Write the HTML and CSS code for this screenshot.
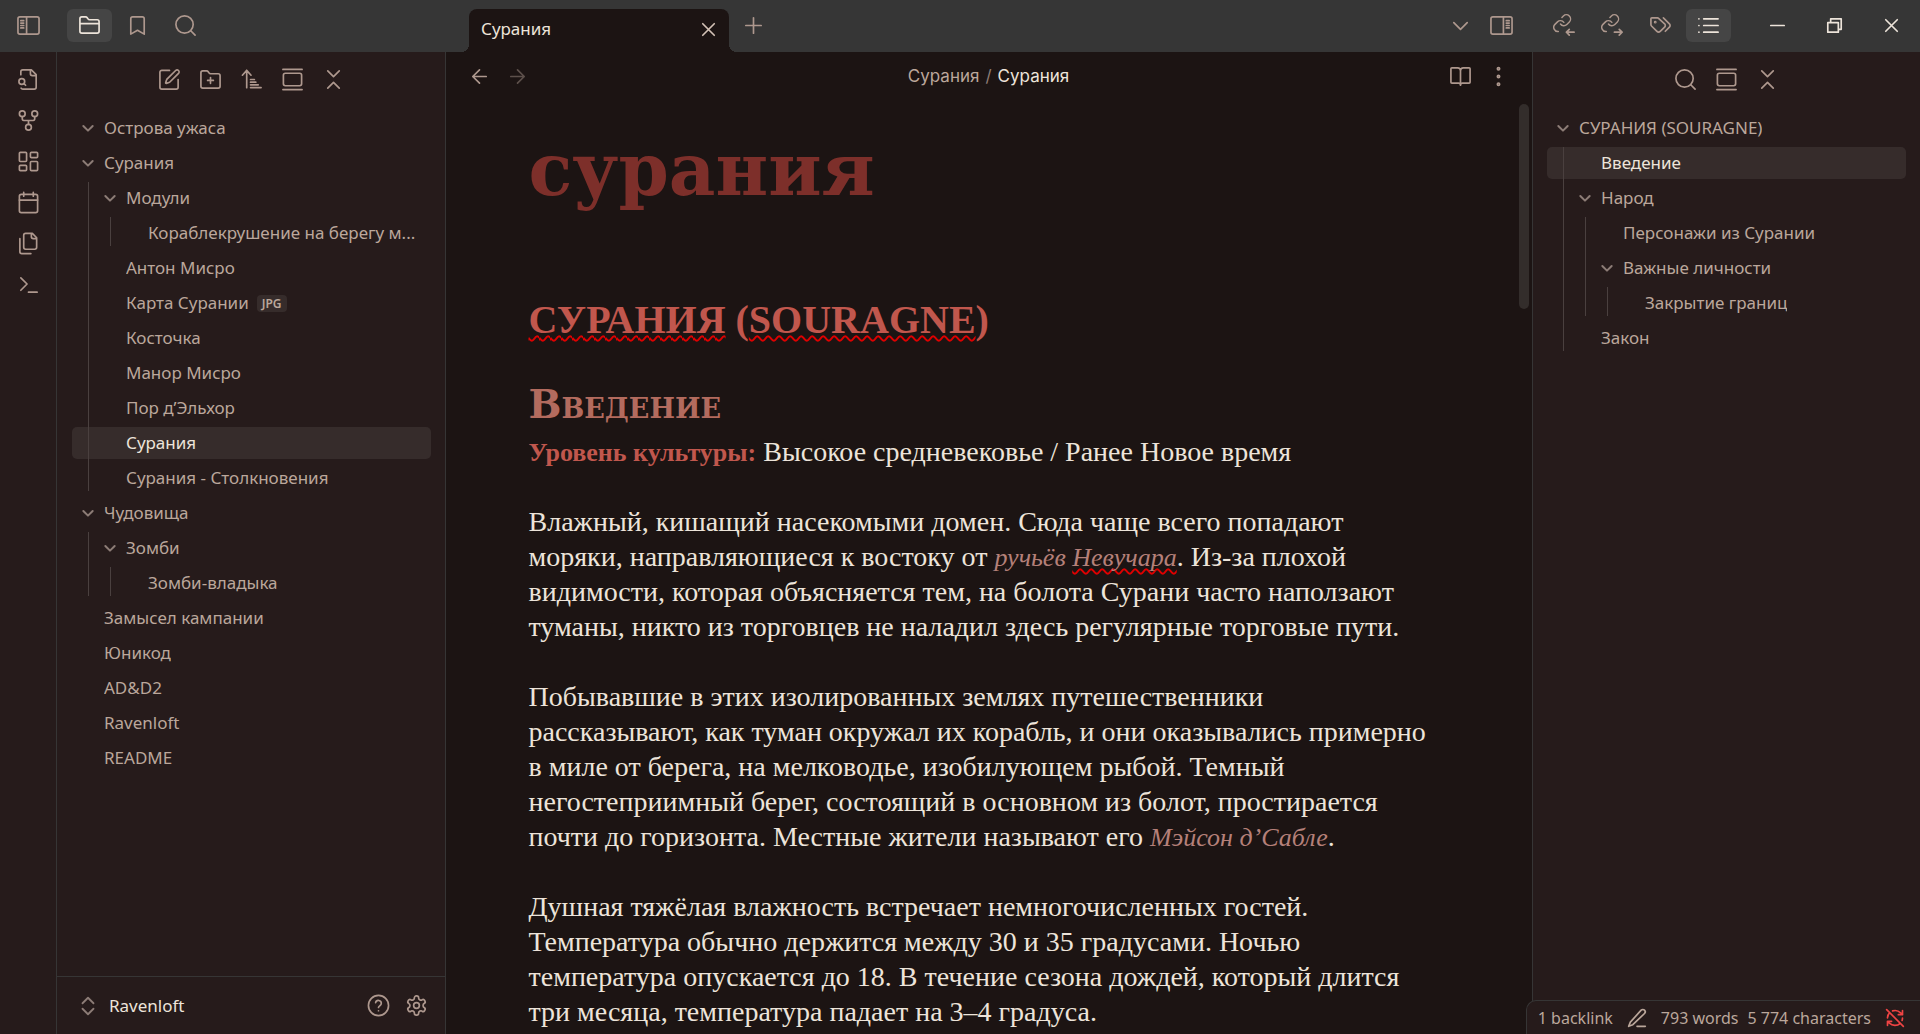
FILE: index.html
```html
<!DOCTYPE html>
<html lang="ru">
<head>
<meta charset="utf-8">
<title>Сурания</title>
<link rel="stylesheet" href="styles.css">
</head>
<body>
<svg class="sprite" aria-hidden="true">
  <symbol id="i-left" viewBox="0 0 24 24"><rect x="1" y="3" width="22" height="18" rx="2"/><path d="M10 3v18M4 7h3M4 9.500h3M4 12h3M4 14.500h3"/></symbol>
  <symbol id="i-right" viewBox="0 0 24 24"><rect x="1" y="3" width="22" height="18" rx="2"/><path d="M14 3v18M17 7h3M17 9.500h3M17 12h3M17 14.500h3"/></symbol>
  <symbol id="i-folder" viewBox="0 0 24 24"><path d="M20 20a2 2 0 0 0 2-2V8a2 2 0 0 0-2-2h-7.900a2 2 0 0 1-1.690-.9L9.600 3.900A2 2 0 0 0 7.930 3H4a2 2 0 0 0-2 2v13a2 2 0 0 0 2 2ZM2 10h20"/></symbol>
  <symbol id="i-bookmark" viewBox="0 0 24 24"><path d="m19 21-7-4-7 4V5a2 2 0 0 1 2-2h10a2 2 0 0 1 2 2v16z"/></symbol>
  <symbol id="i-search" viewBox="0 0 24 24"><circle cx="11" cy="11" r="9"/><path d="m22 22-4.500-4.500"/></symbol>
  <symbol id="i-x" viewBox="0 0 24 24"><path d="M18 6 6 18M6 6l12 12"/></symbol>
  <symbol id="i-plus" viewBox="0 0 24 24"><path d="M4 12h16M12 4v16"/></symbol>
  <symbol id="i-down" viewBox="0 0 24 24"><path d="m5 9 7 7 7-7"/></symbol>
  <symbol id="i-in" viewBox="0 0 24 24"><g transform="translate(-1 -1) scale(.88)"><path d="M10 13a5 5 0 0 0 7.540.54l3-3a5 5 0 0 0-7.070-7.070l-1.720 1.710M14 11a5 5 0 0 0-7.540-.54l-3 3a5 5 0 0 0 4 8.500"/></g><path d="M22 19h-8M17 16l-3 3 3 3"/></symbol>
  <symbol id="i-out" viewBox="0 0 24 24"><g transform="translate(-1 -1) scale(.88)"><path d="M10 13a5 5 0 0 0 7.540.54l3-3a5 5 0 0 0-7.070-7.070l-1.720 1.710M14 11a5 5 0 0 0-7.540-.54l-3 3a5 5 0 0 0 4 8.500"/></g><path d="M14 19h8M19 16l3 3-3 3"/></symbol>
  <symbol id="i-tags" viewBox="0 0 24 24"><path d="m15 4 6.300 6.300a2.400 2.400 0 0 1 0 3.400L17 18"/><path d="M10.500 5A2 2 0 0 0 9 4H3a1 1 0 0 0-1 1v6a2 2 0 0 0 .6 1.500l5.700 5.700a2.400 2.400 0 0 0 3.400 0l4.600-4.600a2.400 2.400 0 0 0 0-3.400z"/><circle cx="6.500" cy="8.500" r=".6"/></symbol>
  <symbol id="i-list" viewBox="0 0 24 24"><path d="M7 5h15M7 12h15M7 19h15M2 5h.01M2 12h.01M2 19h.01"/></symbol>
  <symbol id="i-min" viewBox="0 0 24 24"><path d="M5 12h14"/></symbol>
  <symbol id="i-restore" viewBox="0 0 24 24"><path d="M5 9h11v10H5zM8 9V5h11v11h-3"/></symbol>
  <symbol id="i-filesearch" viewBox="0 0 24 24"><path d="M14 2v4a2 2 0 0 0 2 2h4M4.270 21a2 2 0 0 0 1.730 1H18a2 2 0 0 0 2-2V7l-5-5H6a2 2 0 0 0-2 2v3M9 18l-1.500-1.500"/><circle cx="5" cy="14" r="3"/></symbol>
  <symbol id="i-fork" viewBox="0 0 24 24"><circle cx="12" cy="19" r="3"/><circle cx="5.500" cy="5" r="3"/><circle cx="18.500" cy="5" r="3"/><path d="M18.500 8v2c0 1-.5 2-1.500 2H7c-1 0-1.500-1-1.500-2V8M12 12v4"/></symbol>
  <symbol id="i-dash" viewBox="0 0 24 24"><rect x="2.500" y="2.500" width="7.500" height="9.500" rx="1"/><rect x="14" y="2.500" width="7.500" height="5.500" rx="1"/><rect x="14" y="12" width="7.500" height="9.500" rx="1"/><rect x="2.500" y="16" width="7.500" height="5.500" rx="1"/></symbol>
  <symbol id="i-cal" viewBox="0 0 24 24"><path d="M7 1.500v4M17 1.500v4M2.500 9.500h19"/><rect x="2.500" y="3.500" width="19" height="19" rx="2"/></symbol>
  <symbol id="i-files" viewBox="0 0 24 24"><path d="M20.500 7H17a2 2 0 0 1-2-2V1.500M9 18a2 2 0 0 1-2-2V3.500a2 2 0 0 1 2-2h7L20.500 6v10a2 2 0 0 1-2 2ZM3 7v13.500A2 2 0 0 0 5 22.500h9.500"/></symbol>
  <symbol id="i-term" viewBox="0 0 24 24"><path d="m4 18 6.500-6.500L4 5M12 20h9"/></symbol>
  <symbol id="i-edit" viewBox="0 0 24 24"><path d="M12 2.500H4a2 2 0 0 0-2 2V20a2 2 0 0 0 2 2h15a2 2 0 0 0 2-2v-8M18.400 2.600a1 1 0 0 1 3 3l-9 9a2 2 0 0 1-.9.500l-2.900.9a.5.500 0 0 1-.6-.6l.9-2.900a2 2 0 0 1 .5-.9z"/></symbol>
  <symbol id="i-newfolder" viewBox="0 0 24 24"><path d="M12 10v6M9 13h6M20 21a2 2 0 0 0 2-2V8a2 2 0 0 0-2-2h-7.900a2 2 0 0 1-1.690-.9L9.600 3.900A2 2 0 0 0 7.930 3H4a2 2 0 0 0-2 2v14a2 2 0 0 0 2 2Z"/></symbol>
  <symbol id="i-sort" viewBox="0 0 24 24"><path d="m2.500 7.500 4.500-5 4.500 5M7 2.500v18M11 12h4M11 14.800h5.500M11 17.600h8M11 20.400h11"/></symbol>
  <symbol id="i-gallery" viewBox="0 0 24 24"><path d="M2 1.500h20M2 22.500h20"/><rect x="2.500" y="5.500" width="19" height="13" rx="2"/></symbol>
  <symbol id="i-collapse" viewBox="0 0 24 24"><path d="m6 21 6-6 6 6M6 3l6 6 6-6"/></symbol>
  <symbol id="i-updown" viewBox="0 0 24 24"><path d="m6 15 6 6 6-6M6 9l6-6 6 6"/></symbol>
  <symbol id="i-help" viewBox="0 0 24 24"><circle cx="12" cy="12" r="10.500"/><path d="M9 9a3 3 0 0 1 5.900 1c0 2-2.900 2.500-2.900 4M12 17.500h.01"/></symbol>
  <symbol id="i-gear" viewBox="0 0 24 24"><path d="M12.220 2h-.44a2 2 0 0 0-2 2v.18a2 2 0 0 1-1 1.730l-.43.25a2 2 0 0 1-2 0l-.15-.08a2 2 0 0 0-2.730.73l-.22.38a2 2 0 0 0 .73 2.730l.15.1a2 2 0 0 1 1 1.720v.51a2 2 0 0 1-1 1.740l-.15.09a2 2 0 0 0-.73 2.730l.22.38a2 2 0 0 0 2.730.73l.15-.08a2 2 0 0 1 2 0l.43.25a2 2 0 0 1 1 1.730V20a2 2 0 0 0 2 2h.44a2 2 0 0 0 2-2v-.18a2 2 0 0 1 1-1.730l.43-.25a2 2 0 0 1 2 0l.15.08a2 2 0 0 0 2.730-.73l.22-.39a2 2 0 0 0-.73-2.730l-.15-.08a2 2 0 0 1-1-1.740v-.5a2 2 0 0 1 1-1.740l.15-.09a2 2 0 0 0 .73-2.730l-.22-.38a2 2 0 0 0-2.730-.73l-.15.08a2 2 0 0 1-2 0l-.43-.25a2 2 0 0 1-1-1.730V4a2 2 0 0 0-2-2z"/><circle cx="12" cy="12" r="3"/></symbol>
  <symbol id="i-back" viewBox="0 0 24 24"><path d="m12 19-7-7 7-7M19 12H5"/></symbol>
  <symbol id="i-fwd" viewBox="0 0 24 24"><path d="m12 5 7 7-7 7M5 12h14"/></symbol>
  <symbol id="i-book" viewBox="0 0 24 24"><path d="M12 6v15M3 19a1 1 0 0 1-1-1V4a1 1 0 0 1 1-1h6a3 3 0 0 1 3 3 3 3 0 0 1 3-3h6a1 1 0 0 1 1 1v14a1 1 0 0 1-1 1h-7a2 2 0 0 0-2 2 2 2 0 0 0-2-2z"/></symbol>
  <symbol id="i-dots" viewBox="0 0 24 24"><circle cx="12" cy="4" r="1.200"/><circle cx="12" cy="12" r="1.200"/><circle cx="12" cy="20" r="1.200"/></symbol>
  <symbol id="i-pen" viewBox="0 0 24 24"><path d="M12 22h10M17 2.600a1.500 1.500 0 0 1 4 4L7 20l-5 2 2-5z"/></symbol>
  <symbol id="i-syncoff" viewBox="0 0 24 24"><path d="M21 8l-2.260-2.260A9.750 9.750 0 0 0 9.130 3.470M8 16H3v5M3 12c0-2.490 1-4.740 2.640-6.360M3 16l2.260 2.260A9.750 9.750 0 0 0 18.360 18.360M21 12c0 1-.16 1.970-.47 2.870M21 3v5h-5M22 22 2 2"/></symbol>
</svg>

<div class="app">
  <header class="titlebar">
    <div class="bar-left">
      <button class="btn" aria-label="Свернуть панель"><svg class="icon"><use href="#i-left"/></svg></button>
      <div class="group">
        <button class="btn active" aria-label="Файлы"><svg class="icon"><use href="#i-folder"/></svg></button>
        <button class="btn" aria-label="Закладки"><svg class="icon"><use href="#i-bookmark"/></svg></button>
        <button class="btn" aria-label="Поиск"><svg class="icon"><use href="#i-search"/></svg></button>
      </div>
    </div>
    <div class="tabs">
      <div class="tab"><span>Сурания</span><button class="plain" aria-label="Закрыть вкладку"><svg class="icon"><use href="#i-x"/></svg></button></div>
      <button class="btn" aria-label="Новая вкладка"><svg class="icon"><use href="#i-plus"/></svg></button>
    </div>
    <div class="bar-tools">
      <button class="btn narrow" aria-label="Список вкладок"><svg class="icon"><use href="#i-down"/></svg></button>
      <button class="btn" aria-label="Правая панель"><svg class="icon"><use href="#i-right"/></svg></button>
    </div>
    <div class="bar-right">
      <div class="group">
        <button class="btn" aria-label="Обратные ссылки"><svg class="icon"><use href="#i-in"/></svg></button>
        <button class="btn" aria-label="Исходящие ссылки"><svg class="icon"><use href="#i-out"/></svg></button>
        <button class="btn" aria-label="Теги"><svg class="icon"><use href="#i-tags"/></svg></button>
        <button class="btn active" aria-label="Структура"><svg class="icon"><use href="#i-list"/></svg></button>
      </div>
      <div class="window">
        <button class="btn wide" aria-label="Свернуть"><svg class="icon"><use href="#i-min"/></svg></button>
        <button class="btn wide" aria-label="Восстановить"><svg class="icon"><use href="#i-restore"/></svg></button>
        <button class="btn wide" aria-label="Закрыть"><svg class="icon"><use href="#i-x"/></svg></button>
      </div>
    </div>
  </header>

  <div class="workspace">
    <nav class="ribbon">
      <button class="tool" aria-label="Быстрый переход"><svg class="icon"><use href="#i-filesearch"/></svg></button>
      <button class="tool" aria-label="Граф"><svg class="icon"><use href="#i-fork"/></svg></button>
      <button class="tool" aria-label="Холст"><svg class="icon"><use href="#i-dash"/></svg></button>
      <button class="tool" aria-label="Заметка дня"><svg class="icon"><use href="#i-cal"/></svg></button>
      <button class="tool" aria-label="Шаблоны"><svg class="icon"><use href="#i-files"/></svg></button>
      <button class="tool" aria-label="Команды"><svg class="icon"><use href="#i-term"/></svg></button>
    </nav>

    <aside class="side side-left">
      <div class="side-tools">
        <button class="tool" aria-label="Новая заметка"><svg class="icon"><use href="#i-edit"/></svg></button>
        <button class="tool" aria-label="Новая папка"><svg class="icon"><use href="#i-newfolder"/></svg></button>
        <button class="tool" aria-label="Сортировка"><svg class="icon"><use href="#i-sort"/></svg></button>
        <button class="tool" aria-label="Показать текущий файл"><svg class="icon"><use href="#i-gallery"/></svg></button>
        <button class="tool" aria-label="Свернуть все"><svg class="icon"><use href="#i-collapse"/></svg></button>
      </div>
      <ul class="tree">
        <li><a class="row" href="#"><svg class="chev"><use href="#i-down"/></svg><span>Острова ужаса</span></a></li>
        <li><a class="row" href="#"><svg class="chev"><use href="#i-down"/></svg><span>Сурания</span></a>
          <ul class="sub depth1">
            <li><a class="row" href="#"><svg class="chev"><use href="#i-down"/></svg><span>Модули</span></a>
              <ul class="sub depth2">
                <li><a class="row leaf" href="#"><span>Кораблекрушение на берегу м...</span></a></li>
              </ul>
            </li>
            <li><a class="row leaf" href="#"><span>Антон Мисро</span></a></li>
            <li><a class="row leaf" href="#"><span>Карта Сурании</span><span class="tag">JPG</span></a></li>
            <li><a class="row leaf" href="#"><span>Косточка</span></a></li>
            <li><a class="row leaf" href="#"><span>Манор Мисро</span></a></li>
            <li><a class="row leaf" href="#"><span>Пор д’Эльхор</span></a></li>
            <li><a class="row leaf selected" href="#"><span>Сурания</span></a></li>
            <li><a class="row leaf" href="#"><span>Сурания - Столкновения</span></a></li>
          </ul>
        </li>
        <li><a class="row" href="#"><svg class="chev"><use href="#i-down"/></svg><span>Чудовища</span></a>
          <ul class="sub depth1">
            <li><a class="row" href="#"><svg class="chev"><use href="#i-down"/></svg><span>Зомби</span></a>
              <ul class="sub depth2">
                <li><a class="row leaf" href="#"><span>Зомби-владыка</span></a></li>
              </ul>
            </li>
          </ul>
        </li>
        <li><a class="row leaf" href="#"><span>Замысел кампании</span></a></li>
        <li><a class="row leaf" href="#"><span>Юникод</span></a></li>
        <li><a class="row leaf" href="#"><span>AD&amp;D2</span></a></li>
        <li><a class="row leaf" href="#"><span>Ravenloft</span></a></li>
        <li><a class="row leaf" href="#"><span>README</span></a></li>
      </ul>
      <footer class="vault">
        <button class="vault-name"><svg class="chev big"><use href="#i-updown"/></svg>Ravenloft</button>
        <button class="tool" aria-label="Справка"><svg class="icon"><use href="#i-help"/></svg></button>
        <button class="tool" aria-label="Настройки"><svg class="icon"><use href="#i-gear"/></svg></button>
      </footer>
    </aside>

    <main class="pane">
      <div class="pane-head">
        <div class="head-side">
          <button class="tool" aria-label="Назад"><svg class="icon"><use href="#i-back"/></svg></button>
          <button class="tool dim" aria-label="Вперёд"><svg class="icon"><use href="#i-fwd"/></svg></button>
        </div>
        <div class="crumbs"><a href="#">Сурания</a><span class="sep">/</span><span class="here">Сурания</span></div>
        <div class="head-side end">
          <button class="tool" aria-label="Режим чтения"><svg class="icon"><use href="#i-book"/></svg></button>
          <button class="tool" aria-label="Ещё"><svg class="icon"><use href="#i-dots"/></svg></button>
        </div>
      </div>
      <div class="scroller">
        <article class="note">
          <div class="inline-title">сурания</div>
          <h1><span class="misspelt">СУРАНИЯ</span> (<span class="misspelt">SOURAGNE</span>)</h1>
          <h2>Введение</h2>
          <p><strong>Уровень культуры:</strong> Высокое средневековье / Ранее Новое время</p>
          <p>Влажный, кишащий насекомыми домен. Сюда чаще всего попадают<br>моряки, направляющиеся к востоку от <em>ручьёв <span class="misspelt">Невучара</span></em>. Из-за плохой<br>видимости, которая объясняется тем, на болота Сурани часто наползают<br>туманы, никто из торговцев не наладил здесь регулярные торговые пути.</p>
          <p>Побывавшие в этих изолированных землях путешественники<br>рассказывают, как туман окружал их корабль, и они оказывались примерно<br>в миле от берега, на мелководье, изобилующем рыбой. Темный<br>негостеприимный берег, состоящий в основном из болот, простирается<br>почти до горизонта. Местные жители называют его <em>Мэйсон д’Сабле</em>.</p>
          <p>Душная тяжёлая влажность встречает немногочисленных гостей.<br>Температура обычно держится между 30 и 35 градусами. Ночью<br>температура опускается до 18. В течение сезона дождей, который длится<br>три месяца, температура падает на 3–4 градуса.</p>
        </article>
        <div class="scrollbar"><div class="thumb"></div></div>
      </div>
    </main>

    <aside class="side side-right">
      <div class="side-tools">
        <button class="tool" aria-label="Поиск"><svg class="icon"><use href="#i-search"/></svg></button>
        <button class="tool" aria-label="Прокрутка"><svg class="icon"><use href="#i-gallery"/></svg></button>
        <button class="tool" aria-label="Свернуть все"><svg class="icon"><use href="#i-collapse"/></svg></button>
      </div>
      <ul class="tree">
        <li><a class="row" href="#"><svg class="chev"><use href="#i-down"/></svg><span>СУРАНИЯ (SOURAGNE)</span></a>
          <ul class="sub depth1">
            <li><a class="row leaf selected" href="#"><span>Введение</span></a></li>
            <li><a class="row" href="#"><svg class="chev"><use href="#i-down"/></svg><span>Народ</span></a>
              <ul class="sub depth2">
                <li><a class="row leaf" href="#"><span>Персонажи из Сурании</span></a></li>
                <li><a class="row" href="#"><svg class="chev"><use href="#i-down"/></svg><span>Важные личности</span></a>
                  <ul class="sub depth3">
                    <li><a class="row leaf" href="#"><span>Закрытие границ</span></a></li>
                  </ul>
                </li>
              </ul>
            </li>
            <li><a class="row leaf" href="#"><span>Закон</span></a></li>
          </ul>
        </li>
      </ul>
    </aside>
  </div>

  <div class="status">
    <span>1 backlink</span>
    <svg class="icon small"><use href="#i-pen"/></svg>
    <span class="counts"><span>793 words</span><span>5 774 characters</span></span>
    <svg class="icon small off"><use href="#i-syncoff"/></svg>
  </div>
</div>
</body>
</html>
```

FILE: styles.css
```css
:root {
  --bar: #363636;
  --side: #261b1b;
  --page: #1c1413;
  --line: #363535;
  --muted: #bba79b;
  --icon: #ae988e;
  --text: #ede4da;
  --pick: #362c2b;
}

* { box-sizing: border-box; }

body {
  margin: 0;
  background: var(--page);
  color: var(--text);
  font: 17px/24px "Noto Sans", "Open Sans", sans-serif;
}

button {
  margin: 0;
  padding: 0;
  border: 0;
  background: none;
  color: inherit;
  font: inherit;
}

a { color: inherit; text-decoration: none; }
ul { list-style: none; margin: 0; padding: 0; }

.sprite { position: absolute; width: 0; height: 0; }

.icon, .chev {
  display: block;
  flex: none;
  width: 23px;
  height: 23px;
  fill: none;
  stroke: currentColor;
  stroke-width: 1.75;
  stroke-linecap: round;
  stroke-linejoin: round;
}
.icon.small { width: 20px; height: 20px; stroke-width: 2; }
.chev { width: 16px; height: 16px; stroke-width: 3; color: #8c7c76; }

.app {
  position: relative;
  display: flex;
  flex-direction: column;
  height: 100vh;
  overflow: hidden;
}

/* Title bar */
.titlebar {
  display: flex;
  flex: none;
  height: 52px;
  background: var(--bar);
  color: var(--icon);
}
.btn {
  display: flex;
  align-items: center;
  justify-content: center;
  flex: none;
  width: 45px;
  height: 33px;
  border-radius: 6px;
}
.btn.active { background: #454545; color: var(--text); }
.btn.narrow { width: 38px; }
.btn.wide { width: 57px; color: var(--text); }
.group { display: flex; gap: 3px; }
.bar-left {
  display: flex;
  flex: none;
  gap: 16px;
  width: 446px;
  padding: 9px 6px;
}
.tabs {
  display: flex;
  flex: 1;
  gap: 2px;
  padding: 9px 0 0 23px;
}
.tab {
  position: relative;
  display: flex;
  align-items: center;
  justify-content: space-between;
  width: 260px;
  padding: 0 9px 3px 12px;
  border-radius: 8px 8px 0 0;
  background: var(--page);
  color: var(--text);
}
.tab::before, .tab::after {
  content: "";
  position: absolute;
  bottom: 0;
  width: 8px;
  height: 8px;
}
.tab::before { right: 100%; background: radial-gradient(circle at 0 0, transparent 8px, var(--page) 8px); }
.tab::after { left: 100%; background: radial-gradient(circle at 100% 0, transparent 8px, var(--page) 8px); }
.tab .icon { color: #d3c2b6; }
.bar-tools { display: flex; flex: none; padding: 9px 8px; }
.bar-right {
  display: flex;
  flex: none;
  justify-content: space-between;
  width: 388px;
  padding: 9px 0 9px 10px;
}
.window { display: flex; }

/* Workspace */
.workspace { display: flex; flex: 1; min-height: 0; }
.tool {
  display: flex;
  align-items: center;
  justify-content: center;
  flex: none;
  width: 38px;
  height: 38px;
  color: var(--icon);
}
.tool.dim { color: #5d504b; }
.ribbon {
  display: flex;
  flex: none;
  flex-direction: column;
  align-items: center;
  gap: 3px;
  width: 57px;
  padding-top: 8px;
  border-right: 1px solid var(--line);
  background: var(--side);
}
.side {
  display: flex;
  flex: none;
  flex-direction: column;
  background: var(--side);
}
.side-left { width: 389px; border-right: 1px solid var(--line); }
.side-right { width: 388px; border-left: 1px solid var(--line); }
.side-tools {
  display: flex;
  justify-content: center;
  gap: 3px;
  padding: 8px 0 14px;
}

/* Trees */
.tree { flex: 1; padding: 0 14px; color: var(--muted); --indent: 8px; }
.side-left .tree { padding-left: 15px; }
.row {
  display: flex;
  align-items: center;
  gap: 8px;
  height: 32px;
  margin-bottom: 3px;
  padding-left: var(--indent);
  padding-right: 8px;
  border-radius: 5px;
}
.row span {
  overflow: hidden;
  text-overflow: ellipsis;
  white-space: nowrap;
}
.row.leaf { padding-left: calc(var(--indent) + 24px); }
.row.selected { background: var(--pick); color: var(--text); }
.row .tag {
  padding: 0 5px;
  border-radius: 4px;
  background: var(--pick);
  font-size: 12px;
  font-weight: 600;
  line-height: 17px;
}
.sub { position: relative; }
.sub::before {
  content: "";
  position: absolute;
  top: 0;
  bottom: 3px;
  width: 1px;
  background: #4a403f;
}
.depth1 { --indent: 30px; }
.depth2 { --indent: 52px; }
.depth3 { --indent: 74px; }
.depth1::before { left: 16px; }
.depth2::before { left: 38px; }
.depth3::before { left: 60px; }

.vault {
  display: flex;
  align-items: center;
  height: 58px;
  padding: 0 10px 0 20px;
  border-top: 1px solid var(--line);
}
.vault-name {
  display: flex;
  flex: 1;
  align-items: center;
  gap: 10px;
}
.chev.big { width: 22px; height: 22px; stroke-width: 2; }

/* Note pane */
.pane {
  display: flex;
  flex: 1;
  flex-direction: column;
  min-width: 0;
}
.pane-head {
  display: flex;
  flex: none;
  align-items: center;
  height: 48px;
  padding: 0 15px 0 14px;
}
.head-side { display: flex; flex: 1; }
.head-side.end { justify-content: flex-end; }
.crumbs {
  display: flex;
  gap: 6px;
  color: var(--muted);
  font-family: Inter, sans-serif;
}
.crumbs .sep { color: #8c7c76; }
.crumbs .here { color: var(--text); }
.scroller { display: flex; flex: 1; min-height: 0; overflow: hidden; }
.note {
  flex: 0 1 906px;
  margin: 0 auto;
  font: 28px/35px "Liberation Serif", serif;
  white-space: nowrap;
}
.scrollbar { flex: none; width: 15px; padding: 4px 3px 0 2px; }
.thumb { height: 205px; border-radius: 5px; background: #332d2b; }

.inline-title {
  padding: 30px 0 68px;
  color: #7d2f2a;
  font: bold 72px/80px "DejaVu Serif", serif;
}
h1, h2 { margin: 0; font-weight: bold; }
h1 { color: #c1574d; font-size: 40px; line-height: 84px; }
h2 {
  margin-top: 12px;
  color: #b36b5e;
  font-family: "DejaVu Serif", serif;
  font-size: 39px;
  font-variant: small-caps;
  line-height: 60px;
}
p { margin: 0 0 35px; }
strong, em { font-size: 26px; line-height: 1; }
strong { color: #c1574d; }
em { color: #b58079; }
.misspelt {
  text-decoration: underline wavy #e00000 2px;
  text-decoration-skip-ink: none;
  text-underline-offset: 2px;
}

/* Status bar floats over the lower right corner */
.status {
  position: absolute;
  right: 0;
  bottom: 0;
  display: flex;
  align-items: center;
  gap: 14px;
  height: 34px;
  padding: 0 15px 0 11px;
  border: solid var(--line);
  border-width: 1px 0 0 1px;
  border-radius: 10px 0 0 0;
  background: var(--side);
  color: var(--muted);
  font-size: 16px;
}
.counts { display: flex; gap: 9px; }
.off { color: #f04444; }
```
